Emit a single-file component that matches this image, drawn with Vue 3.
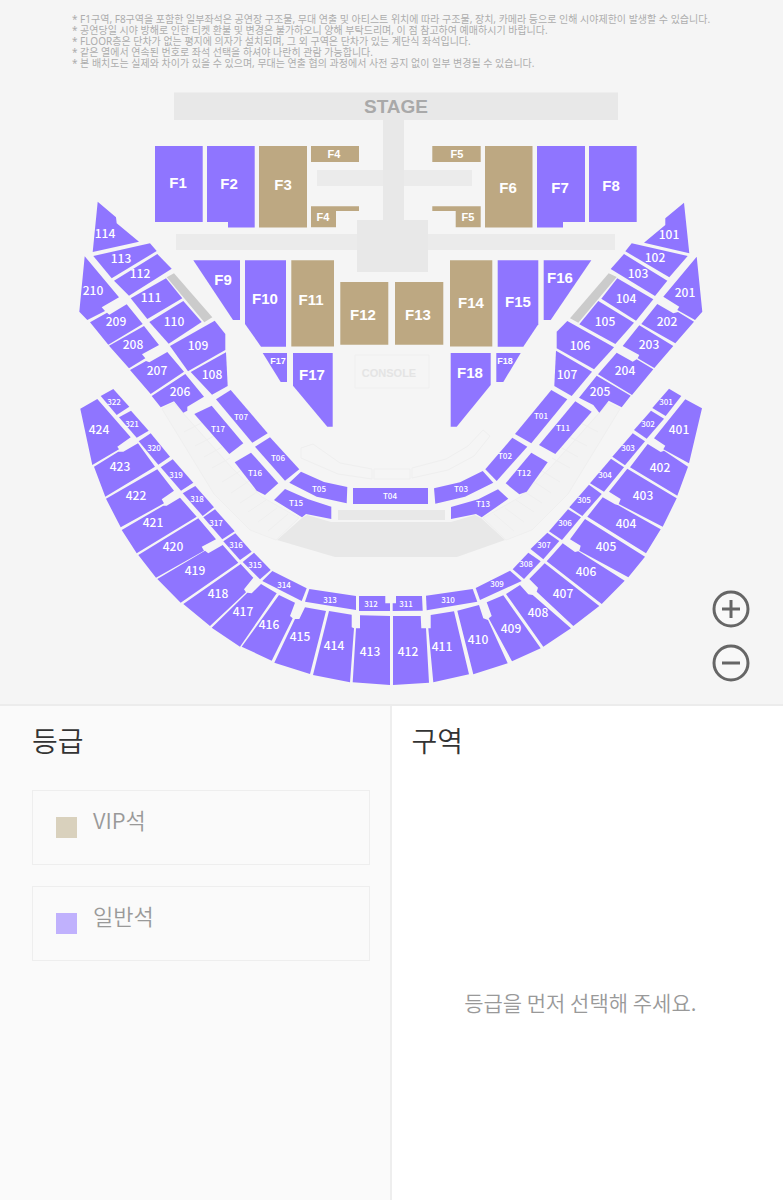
<script setup>
import { ref, computed } from 'vue';

const notices = [
  '* F1구역, F8구역을 포함한 일부좌석은 공연장 구조물, 무대 연출 및 아티스트 위치에 따라 구조물, 장치, 카메라 등으로 인해 시야제한이 발생할 수 있습니다.',
  '* 공연당일 시야 방해로 인한 티켓 환불 및 변경은 불가하오니 양해 부탁드리며, 이 점 참고하여 예매하시기 바랍니다.',
  '* FLOOR층은 단차가 없는 평지에 의자가 설치되며, 그 외 구역은 단차가 있는 계단식 좌석입니다.',
  '* 같은 열에서 연속된 번호로 좌석 선택을 하셔야 나란히 관람 가능합니다.',
  '* 본 배치도는 실제와 차이가 있을 수 있으며, 무대는 연출 협의 과정에서 사전 공지 없이 일부 변경될 수 있습니다.'
];

const grades = [
  { id: 'vip', name: 'VIP석' },
  { id: 'normal', name: '일반석' }
];

// [name, label x, label y, polygon points]
const floorVip = [
  ['F3', 283, 185, '259,146 307,146 307,227.5 259,227.5'],
  ['F6', 508, 188, '485,146 532.5,146 532.5,227.5 485,227.5'],
  ['F11', 311, 300, '291.3,260.3 334,260.3 334,346.5 291.3,346.5'],
  ['F12', 363, 315, '340.3,282 388.3,282 388.3,344.7 340.3,344.7'],
  ['F13', 418, 315, '395,282 443.3,282 443.3,344.7 395,344.7'],
  ['F14', 471, 303, '450,260.3 492.3,260.3 492.3,346.5 450,346.5']
];

const floorVipSmall = [
  ['F4', 334, 154, '311,146 359,146 359,162 311,162'],
  ['F4', 323, 217, '311,206.3 359,206.3 359,211 336,211 336,227.3 311,227.3'],
  ['F5', 457, 154, '432.3,146 480.7,146 480.7,162 432.3,162'],
  ['F5', 468, 217, '432.3,206.3 480.7,206.3 480.7,227.3 455.7,227.3 455.7,211 432.3,211']
];

const floor = [
  ['F1', 178, 183, '155,146 202.7,146 202.7,222 155,222'],
  ['F2', 229, 184, '207,146 254.7,146 254.7,227.5 228,227.5 228,222 207,222'],
  ['F7', 560, 188, '537,146 585,146 585,222 563,222 563,227.5 537,227.5'],
  ['F8', 611, 186, '589,146 636.7,146 636.7,222 589,222'],
  ['F9', 223, 280, '193.3,260.3 240,260.3 240,320 233,320'],
  ['F10', 265, 299, '245,260.3 286,260.3 286,346.7 261,346.7 245,324'],
  ['F15', 518, 302, '497.7,260.3 538.3,260.3 538.3,324.3 523.3,346.7 497.7,346.7'],
  ['F16', 560, 278, '543.7,260.3 591.3,260.3 550.7,320 543.7,320'],
  ['F17', 312, 375, '293,353 332.7,353 332.7,426.7 327.3,426.7 293,385.7'],
  ['F18', 470, 373, '450.7,353 490.7,353 490.7,385 456.7,426.7 450.7,426.7']
];

const floorTiny = [
  ['F17', 278, 361, '262.7,353 287,353 287,382 280.7,382'],
  ['F18', 505, 361, '496.3,353 520.7,353 503.3,382 496.3,382']
];

const lower = [
  ['101', 669, 235, '684,202.7 689.3,253.3 644,242.7 665.3,225 665.3,218.3'],
  ['102', 655, 258, '631.7,243.3 687.7,256 669.3,277.3 625.3,251.3'],
  ['103', 638, 274, '624,254 667.3,280.7 655,296 610.7,269'],
  ['104', 626, 299, '617.3,278.3 653.3,299.3 636,320.7 601.3,298.7'],
  ['105', 605, 322, '598.3,301 634,322.7 615.3,344 579.3,324.3'],
  ['106', 580, 346, '567.3,321 614,347.3 594,369.3 556.7,348.3 556.7,331.7'],
  ['107', 567, 375, '556,350.7 592,371.7 571.7,396 554.3,386'],
  ['108', 212, 375, '226,352.3 227.7,386 212,394.7 190.7,372'],
  ['109', 198, 346, '214.7,320.7 225.3,334 225.3,350 188,371.3 170,346'],
  ['110', 174, 322, '183.3,301 201.7,322 168.7,343.7 149.3,322'],
  ['111', 151, 298, '166,278.3 182.3,298.3 147.3,319 130.7,298.3'],
  ['112', 140, 274, '157.3,254 171.7,268.7 129,295.7 114,280.7'],
  ['113', 121, 259, '93.3,256 150,243.3 156.7,251 111.7,278.3'],
  ['114', 105, 234, '97.7,201.7 116,217.3 116.7,223.3 139,241.7 92.7,252'],
  ['201', 685, 293, '696.7,256.7 702.3,311.7 695,320 677.3,310 679.3,306.7 663.3,296.7'],
  ['202', 667, 322, '657.3,304 673.3,313.3 678,312 694,321.7 675.3,343.3 641.3,324'],
  ['203', 649, 345, '639.3,325.3 673.3,346 654.3,368 637.7,358.3 639.3,355 622.7,346'],
  ['204', 625, 371, '616.7,352.7 632.7,361.7 636.7,359.3 653.3,369.3 632,395 598,374.3'],
  ['205', 600, 392, '596.7,375.7 630.7,395.7 621.7,407.3 608.7,400.7 599.3,412.7 593.3,405 579,397.7'],
  ['206', 180, 392, '185.3,374 204,396.7 187.3,406.7 187.3,410.7 183.3,412.7 174,401.3 160.7,407.3 151.7,396'],
  ['207', 157, 371, '167.3,352 184,371.7 150.7,394 130,370 146,361 149.3,362.3'],
  ['208', 133, 345, '144,326 159,345 142,354.3 145.3,358.3 129,368.3 109,345.7'],
  ['209', 116, 322, '126.7,304.3 142.7,324 108.3,344.7 90,322.3 107,312.7 109.3,314.7'],
  ['210', 93, 291, '84.7,256.3 119,297.3 101.7,307.3 105,311 87.3,320 79.3,311.7']
];

const upper = [
  ['401', 679, 430, '685.3,399.3 702,408.3 689,463.3 663.3,449.3 665.3,445.7 654,438.3'],
  ['402', 660, 468, '647.7,444 660.7,452 664,450.7 688,466.7 677.3,495.7 630,467.3'],
  ['403', 643, 496, '627.3,468.7 676.7,498.3 662.7,526.7 618.7,504 620.7,499 609,491.7'],
  ['404', 626, 524, '602.7,497.3 615,504.3 618.3,505.3 660.7,529.3 646,553.3 587.3,516.7'],
  ['405', 606, 547, '585,519 645,556.7 628.3,577.3 579.3,550.7 580.7,545.7 570,539.3'],
  ['406', 586, 572, '562.7,543.3 575,552 578.3,551.3 624.7,580.7 601.7,604 546.7,561.3'],
  ['407', 563, 594, '544.7,563.3 599.3,606 573.3,626 536.7,591.7 538,587.7 529.3,579'],
  ['408', 538, 613, '520,585 528.3,594.3 532.7,595 571,628.3 543.3,646.7 506,594'],
  ['409', 511, 629, '503.3,595.3 540.7,648.3 512,661.3 488.7,618.3 491.7,616 486.7,602.3'],
  ['410', 478, 640, '479,605 483.3,618.3 488,620 507.7,663.3 473.3,674.3 457.3,610.7'],
  ['411', 442, 647, '454,611.3 469,674.3 433.3,682.3 428.3,628.3 430.7,628.3 430.7,615'],
  ['412', 408, 652, '393,616 420.7,616 421.3,628.3 426,628.3 429,682.7 393,685'],
  ['413', 370, 652, '360,615.3 390,616 390,685 352.7,682.3 356,628.3 360,628.3'],
  ['414', 334, 646, '329,611 351.7,614.7 351.7,627.3 354,628.3 350,682.3 313,675'],
  ['415', 300, 637, '305,607.3 326,611 310,674 274.3,662.7 295,619 299.3,619'],
  ['416', 269, 625, '279,595 295,602.7 290,616 292.7,618.3 271.7,660.7 241.7,646.7'],
  ['417', 243, 612, '261,584 276.7,593.3 240,646.7 211.7,627.7 247.3,592.7 251.7,593.3'],
  ['418', 218, 594, '240.7,564 253.3,577.7 244,589.3 246,592.3 210,626 183.3,604'],
  ['419', 195, 571, '222.7,545 238.3,562.7 180.7,602.7 157.3,579 205,550.7 208.3,553.3'],
  ['420', 173, 547, '198.3,518.3 216,539.3 201.7,546.7 204,550.7 156,577.7 138.3,555'],
  ['421', 153, 523, '180,497.7 196.7,516.7 136.7,553.3 121.7,530 163.3,505.7 166.7,505.7'],
  ['422', 136, 496, '157.3,469.3 174,490.7 161.7,499.3 164,503.3 120.7,527.3 106,498.7'],
  ['423', 120, 467, '138,443.3 155,466.7 105.3,496.7 94,466.7 118.3,451.7 123.3,451.7'],
  ['424', 99, 430, '97.3,399 130.7,437.3 117.3,446.7 119,449.3 92.3,465 80.3,408.7']
];

const small = [
  ['T01', 541, 416, '551.3,390 567.3,399.3 531.3,443.3 515,434'],
  ['T02', 505, 456, '512.3,437.7 527.3,446.7 496.7,481 485.3,469.3'],
  ['T03', 461, 489, '434,488.3 460,482.3 482.7,471 493.3,482.7 465,496.7 435.3,503.7'],
  ['T04', 390, 496, '353,488 428,488 428,504 353,504'],
  ['T05', 319, 489, '301,471.7 324,482 347.3,487 346.7,503.3 316.7,496.7 289.3,482.7'],
  ['T06', 278, 458, '270,437.3 299.3,469.3 285,480.7 255,446.7'],
  ['T07', 241, 417, '230.7,390 267.7,433.3 252.3,442.7 216,399.3'],
  ['T11', 563, 428, '575.3,401.3 591.7,411.7 555.3,454 539,445'],
  ['T12', 524, 473, '531.3,452.7 547.7,462.3 526.7,491.7 519.3,494.3 505.7,483.3'],
  ['T13', 483, 504, '451,507 478.3,499.3 498,489.3 508.3,498.7 481.7,517.3 476,514 451,519'],
  ['T15', 296, 503, '285,489 308.3,499.3 331.3,506.7 331.3,519 306,514 302,517.3 274,500'],
  ['T16', 255, 473, '251,452.7 278.3,483.3 265,495 256.7,490.7 234.7,462.3'],
  ['T17', 218, 429, '211.7,405.7 243.3,443.3 229.3,454 194.3,414'],
  ['301', 666, 402, '669,388.7 681.3,396 665.7,416 652.3,408'],
  ['302', 648, 424, '651,410.7 664,418.7 646.7,438.7 634,430'],
  ['303', 628, 448, '632.7,433.3 645,441.3 625,465.3 612.3,456.7'],
  ['304', 605, 475, '611,458.7 624,467.3 604,491.7 590,483.3'],
  ['305', 584, 500, '589,484.7 601.7,494 582.3,516 569.3,507.3'],
  ['306', 565, 523, '568,509.3 581,517.3 562,540 549,531.3'],
  ['307', 544, 545, '547.3,532.7 559.3,541 543.3,559.3 530.5,549'],
  ['308', 526, 564, '528.3,552.7 540.7,561.3 524,579 512.7,569.3'],
  ['309', 497, 584, '475.7,588 510,570.7 521.7,581 480,600'],
  ['310', 448, 600, '426,595.7 472.7,589 477.3,601.7 426.7,610.3'],
  ['311', 406, 604, '396,596 422,596 422.7,610.7 392.7,611 392.7,603.3 396,603.3'],
  ['312', 371, 604, '359,596 385.3,596 385.3,603.3 390,603.3 390,611 359,611'],
  ['313', 330, 600, '309.3,589 356,596 356,610 305,601.7'],
  ['314', 284, 585, '272.3,571 306.7,588.3 301.7,601 262.3,581'],
  ['315', 255, 565, '254,552.7 270.7,570 260,579.3 242.7,562'],
  ['316', 236, 545, '235.3,533.3 251.7,551.7 240,560 223.3,541.3'],
  ['317', 216, 523, '215,509.3 234.7,531.3 222.3,539.3 203.3,517.3'],
  ['318', 197, 499, '195.3,486 214,507.3 202.7,516 182.7,493.3'],
  ['319', 176, 475, '172.7,459.3 193.3,482.7 181,490.7 160.7,467.3'],
  ['320', 154, 448, '150.7,433.3 170,456.7 158.3,464.7 138.7,441.3'],
  ['321', 132, 424, '131,410.7 148.7,430.7 136.7,437.7 119,417.3'],
  ['322', 114, 402, '113.3,389 129.3,406.7 116.7,415 100.7,396']
];

const toSections = (list, grade, size) =>
  list.map(([name, x, y, points]) => ({ name, x, y, points, grade, size }));

const sections = [
  ...toSections(floor, 'normal', 'floor'),
  ...toSections(floorVip, 'vip', 'floor'),
  ...toSections(floorVipSmall, 'vip', 'floor-small'),
  ...toSections(floorTiny, 'normal', 'floor-tiny'),
  ...toSections(lower, 'normal', 'lower'),
  ...toSections(upper, 'normal', 'upper'),
  ...toSections(small, 'normal', 'small')
];

const selectedGrade = ref(null);
const zoomLevel = ref(1);

const areas = computed(() => {
  const names = sections.filter((s) => s.grade === selectedGrade.value).map((s) => s.name);
  return [...new Set(names)];
});

const viewBox = computed(() => {
  const w = 783 / zoomLevel.value;
  const h = 634 / zoomLevel.value;
  return `${(783 - w) / 2} ${70 + (634 - h) / 2} ${w} ${h}`;
});

const zoomIn = () => {
  zoomLevel.value = Math.min(3, zoomLevel.value + 0.5);
};

const zoomOut = () => {
  zoomLevel.value = Math.max(1, zoomLevel.value - 0.5);
};
</script>

<template>
  <div class="booking">
    <section class="map">
      <div class="notices">
        <p v-for="notice in notices" :key="notice">{{ notice }}</p>
      </div>

      <svg class="seat-map" :viewBox="viewBox">
        <g class="stage">
          <path d="M174 92.5H618V120H404V220H428V272H357V220H383V120H174Z" />
          <path class="soft" d="M317 170H383V186H317ZM404 170H472V186H404ZM176 234H357V250H176ZM428 234H615V250H428Z" />
          <path d="M338 510H445V520H338Z" />
          <path d="M302 518L307 515L331 522H451L475 515L481 518L505 540L457 557H335L277 540Z" />
        </g>
        <g class="closed">
          <path d="M166.7 277.3L174 273.3L212.3 317.3L204.3 322.3Z" />
          <path d="M608.7 273.3L616.7 277L578.3 322.7L570 318.3Z" />
        </g>
        <g class="steps">
          <path d="M162 409L174 403L232 468L262 497L299 518L276 540L250 530L214 494Z" />
          <path d="M620 409L608 403L550 468L520 497L483 518L506 540L532 530L568 494Z" />
          <path d="M184 432L203 422M195 446L214 436M204 457L222 447M212 468L230 458M222 482L240 471M231 493L249 481M240 503L257 492M248 512L266 500M258 522L277 508M268 531L288 514" />
          <path d="M598 432L579 422M587 446L568 436M578 457L560 447M570 468L552 458M560 482L542 471M551 493L533 481M542 503L525 492M534 512L516 500M524 522L505 508M514 531L494 514" />
        </g>
        <g class="outline">
          <path d="M301 448L313 444L340 463L372 469V479L338 474L301 458ZM374 469H410V479H374ZM412 468L446 459L468 446L483 430L490 436L474 456L448 470L412 478Z" />
          <path d="M355 355H429V388H355Z" />
        </g>
        <text class="stage-name" x="396" y="113">STAGE</text>
        <text class="console-name" x="389" y="377">CONSOLE</text>

        <g
          v-for="(section, i) in sections"
          :key="i"
          class="section"
          :class="[section.grade, section.size]"
          @click="selectedGrade = section.grade"
        >
          <polygon :points="section.points" />
          <text :x="section.x" :y="section.y" dy="0.36em">{{ section.name }}</text>
        </g>
      </svg>

      <div class="zoom">
        <button type="button" aria-label="확대" @click="zoomIn">
          <svg viewBox="0 0 38 38">
            <circle cx="19" cy="19" r="17" />
            <path d="M10 19H28M19 10V28" />
          </svg>
        </button>
        <button type="button" aria-label="축소" @click="zoomOut">
          <svg viewBox="0 0 38 38">
            <circle cx="19" cy="19" r="17" />
            <path d="M10 19H28" />
          </svg>
        </button>
      </div>
    </section>

    <div class="panels">
      <section class="panel grade-panel">
        <h2>등급</h2>
        <div class="grade-list">
          <button
            v-for="grade in grades"
            :key="grade.id"
            type="button"
            class="grade"
            :class="{ selected: selectedGrade === grade.id }"
            @click="selectedGrade = grade.id"
          >
            <span class="swatch" :class="grade.id"></span>
            <span class="grade-name">{{ grade.name }}</span>
          </button>
        </div>
      </section>

      <section class="panel area-panel">
        <h2>구역</h2>
        <p v-if="!selectedGrade" class="empty">등급을 먼저 선택해 주세요.</p>
        <ul v-else class="areas">
          <li v-for="area in areas" :key="area">{{ area }}</li>
        </ul>
      </section>
    </div>
  </div>
</template>

<style>
body {
  margin: 0;
}
</style>

<style scoped>
.booking {
  display: flex;
  flex-direction: column;
  min-height: 100vh;
  font-family: "Noto Sans CJK KR", sans-serif;
  color: #333;
}

.map {
  position: relative;
  background-color: #f5f5f5;
}

.notices {
  padding: 14px 0 1px 72px;
  font-family: "Noto Sans", "Noto Sans CJK KR", sans-serif;
  font-size: 10px;
  line-height: 11px;
  color: #adadad;
}

.notices p {
  margin: 0;
}

.seat-map {
  display: block;
  width: 100%;
}

.stage {
  fill: #e8e8e8;
}

.stage .soft {
  fill: #ebebeb;
}

.closed {
  fill: #cbcbcb;
}

.steps {
  fill: #f3f3f3;
  stroke: #efefef;
}

.outline {
  fill: none;
  stroke: #efefef;
}

text {
  text-anchor: middle;
}

.stage-name {
  font: bold 19px "Liberation Sans", sans-serif;
  fill: #a9a9a9;
}

.console-name {
  font: bold 11px "Liberation Sans", sans-serif;
  fill: #e4e4e4;
}

.section {
  cursor: pointer;
  fill: #8f75ff;
}

.section.vip {
  fill: #bda882;
}

.section text {
  font-family: "Noto Sans CJK KR", sans-serif;
  font-weight: 500;
  fill: #fff;
}

.section.floor text,
.section.floor-small text,
.section.floor-tiny text {
  font-family: "Liberation Sans", sans-serif;
  font-weight: bold;
}

.floor text {
  font-size: 15px;
}

.floor-small text {
  font-size: 11px;
}

.floor-tiny text {
  font-size: 9px;
}

.lower text,
.upper text {
  font-size: 12px;
}

.small text {
  font-size: 8px;
}

.zoom {
  position: absolute;
  right: 33px;
  bottom: 22px;
  display: flex;
  flex-direction: column;
  gap: 16px;
}

.zoom button {
  width: 38px;
  height: 38px;
  padding: 0;
  border: none;
  border-radius: 50%;
  background: #f8f8f8;
  cursor: pointer;
}

.zoom svg {
  display: block;
  fill: none;
  stroke: #666;
  stroke-width: 3;
}

.panels {
  flex: 1;
  display: flex;
  border-top: 2px solid #ececec;
}

.panel {
  flex: 1;
  box-sizing: border-box;
  display: flex;
  flex-direction: column;
}

.grade-panel {
  padding: 0 20px 0 32px;
  background-color: #fafafa;
  border-right: 2px solid #eee;
}

.area-panel {
  padding: 0 34px 0 20px;
  background-color: #fff;
}

h2 {
  margin: 14px 0 30px;
  font-size: 28px;
  line-height: 40px;
  font-weight: 350;
}

.grade-list {
  display: flex;
  flex-direction: column;
  gap: 21px;
}

.grade {
  display: flex;
  align-items: flex-start;
  gap: 16px;
  height: 75px;
  padding: 12px 23px;
  border: 1px solid #eee;
  background: none;
  font: 350 22px/32px "Noto Sans CJK KR", sans-serif;
  color: #999;
  text-align: left;
  cursor: pointer;
}

.grade.selected {
  border-color: #999;
}

.swatch {
  width: 21px;
  height: 21px;
  margin-top: 14px;
  opacity: 0.6;
}

.swatch.vip {
  background-color: #c3b695;
}

.swatch.normal {
  background-color: #9980ff;
}

.empty {
  flex: 1;
  display: flex;
  align-items: center;
  justify-content: center;
  margin: 14px 0 0;
  font-size: 21px;
  font-weight: 350;
  color: #999;
}

.areas {
  display: flex;
  flex-wrap: wrap;
  gap: 8px 16px;
  margin: 0;
  padding: 0;
  list-style: none;
  font-size: 16px;
  color: #666;
}
</style>
